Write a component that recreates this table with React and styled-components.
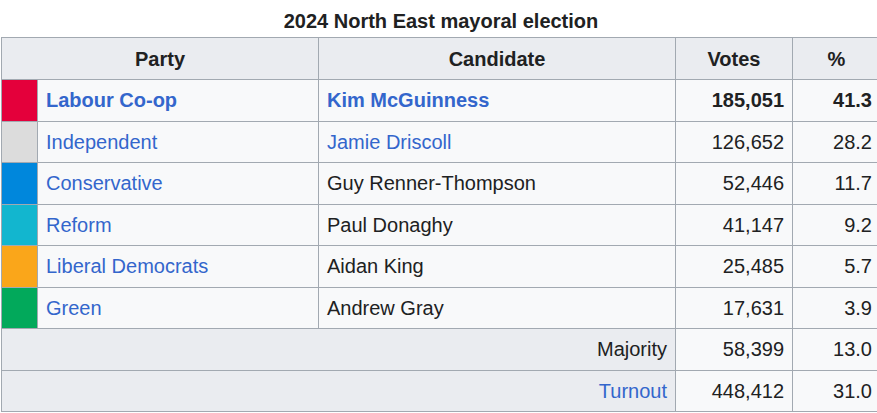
import styled, { createGlobalStyle } from 'styled-components';

const GlobalStyle = createGlobalStyle`
  html, body {
    margin: 0;
    padding: 0;
    overflow: hidden;
    background: #ffffff;
  }
  body {
    font-family: "Liberation Sans", Arial, sans-serif;
    color: #202122;
  }
`;

const Page = styled.div`
  padding-left: 1px;
  width: 900px;
`;

const Table = styled.table`
  border-collapse: collapse;
  table-layout: fixed;
  width: 880px;
  font-size: 20px;
  line-height: 32px;
  color: #202122;
  background: #f8f9fa;
  border: 1px solid #a2a9b1;
`;

const Caption = styled.caption`
  font-weight: bold;
  font-size: 20px;
  line-height: 32px;
  padding: 5px 0 0;
  background: #ffffff;
  text-align: center;
`;

const Th = styled.th`
  background: #eaecf0;
  border: 1px solid #a2a9b1;
  padding: 4.5px 8px;
  text-align: center;
  font-weight: bold;
`;

const Td = styled.td`
  border: 1px solid #a2a9b1;
  padding: 4.25px 8px;
  text-align: ${(p) => (p.$num ? 'right' : 'left')};
  font-weight: ${(p) => (p.$bold ? 'bold' : 'normal')};
  background: ${(p) => (p.$grey ? '#eaecf0' : '#f8f9fa')};
  white-space: nowrap;
`;

const Swatch = styled.td`
  border: 1px solid #a2a9b1;
  padding: 0;
  background: ${(p) => p.$color};
`;

const Link = styled.a`
  color: #3366cc;
  text-decoration: none;
`;

const rows = [
  { color: '#e4003b', party: 'Labour Co-op', candidate: 'Kim McGuinness', candLink: true, votes: '185,051', pct: '41.3', win: true },
  { color: '#dcdcdc', party: 'Independent', candidate: 'Jamie Driscoll', candLink: true, votes: '126,652', pct: '28.2' },
  { color: '#0087dc', party: 'Conservative', candidate: 'Guy Renner-Thompson', votes: '52,446', pct: '11.7' },
  { color: '#12b6cf', party: 'Reform', candidate: 'Paul Donaghy', votes: '41,147', pct: '9.2' },
  { color: '#faa61a', party: 'Liberal Democrats', candidate: 'Aidan King', votes: '25,485', pct: '5.7' },
  { color: '#02a95b', party: 'Green', candidate: 'Andrew Gray', votes: '17,631', pct: '3.9' },
];

const App = () => {
  return (
    <Page>
      <GlobalStyle />
      <Table>
        <Caption>2024 North East mayoral election</Caption>
        <colgroup>
          <col style={{ width: 36 }} />
          <col style={{ width: 281 }} />
          <col style={{ width: 357 }} />
          <col style={{ width: 117 }} />
          <col style={{ width: 88 }} />
        </colgroup>
        <thead>
          <tr>
            <Th colSpan={2}>Party</Th>
            <Th>Candidate</Th>
            <Th>Votes</Th>
            <Th>%</Th>
          </tr>
        </thead>
        <tbody>
          {rows.map((r) => (
            <tr key={r.party}>
              <Swatch $color={r.color} />
              <Td $bold={r.win}>
                <Link href="#">{r.party}</Link>
              </Td>
              <Td $bold={r.win}>
                {r.candLink ? <Link href="#">{r.candidate}</Link> : r.candidate}
              </Td>
              <Td $num $bold={r.win}>{r.votes}</Td>
              <Td $num $bold={r.win}>{r.pct}</Td>
            </tr>
          ))}
          <tr>
            <Td colSpan={3} $num $grey>Majority</Td>
            <Td $num>58,399</Td>
            <Td $num>13.0</Td>
          </tr>
          <tr>
            <Td colSpan={3} $num $grey>
              <Link href="#">Turnout</Link>
            </Td>
            <Td $num>448,412</Td>
            <Td $num>31.0</Td>
          </tr>
        </tbody>
      </Table>
    </Page>
  );
};

export default App;
